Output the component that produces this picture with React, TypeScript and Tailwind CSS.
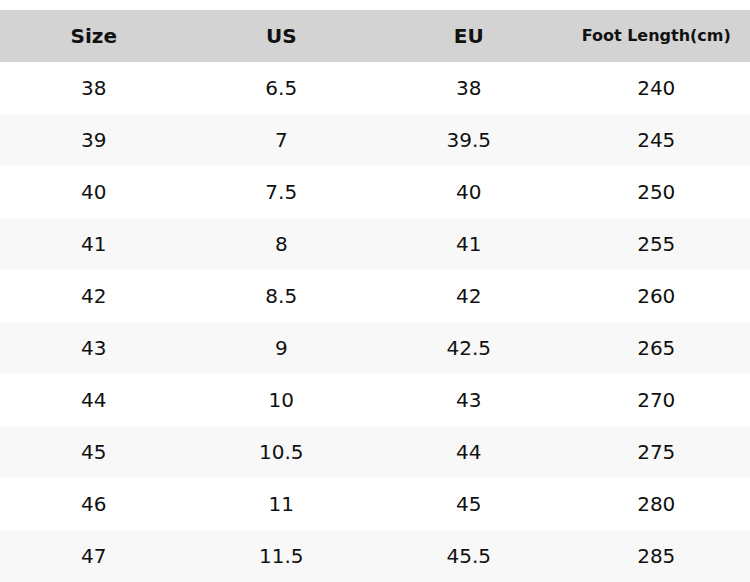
const rows = [
  ['38', '6.5', '38', '240'],
  ['39', '7', '39.5', '245'],
  ['40', '7.5', '40', '250'],
  ['41', '8', '41', '255'],
  ['42', '8.5', '42', '260'],
  ['43', '9', '42.5', '265'],
  ['44', '10', '43', '270'],
  ['45', '10.5', '44', '275'],
  ['46', '11', '45', '280'],
  ['47', '11.5', '45.5', '285'],
];

export default function App() {
  return (
    <div className="w-[750px] h-[582px] bg-white pt-[10px] font-['DejaVu_Sans',sans-serif] text-[#111]">
      <div className="grid grid-cols-4 h-[52px] bg-[#d3d3d3] font-bold items-center text-center">
        <div className="text-[20px]">Size</div>
        <div className="text-[20px]">US</div>
        <div className="text-[20px]">EU</div>
        <div className="text-[16px]">Foot Length(cm)</div>
      </div>
      {rows.map((r, i) => (
        <div
          key={r[0]}
          className={`grid grid-cols-4 h-[52px] items-center text-center text-[20px] ${i % 2 === 1 ? 'bg-[#f8f8f8]' : 'bg-white'}`}
        >
          {r.map((c, j) => (
            <div key={j}>{c}</div>
          ))}
        </div>
      ))}
    </div>
  );
}
